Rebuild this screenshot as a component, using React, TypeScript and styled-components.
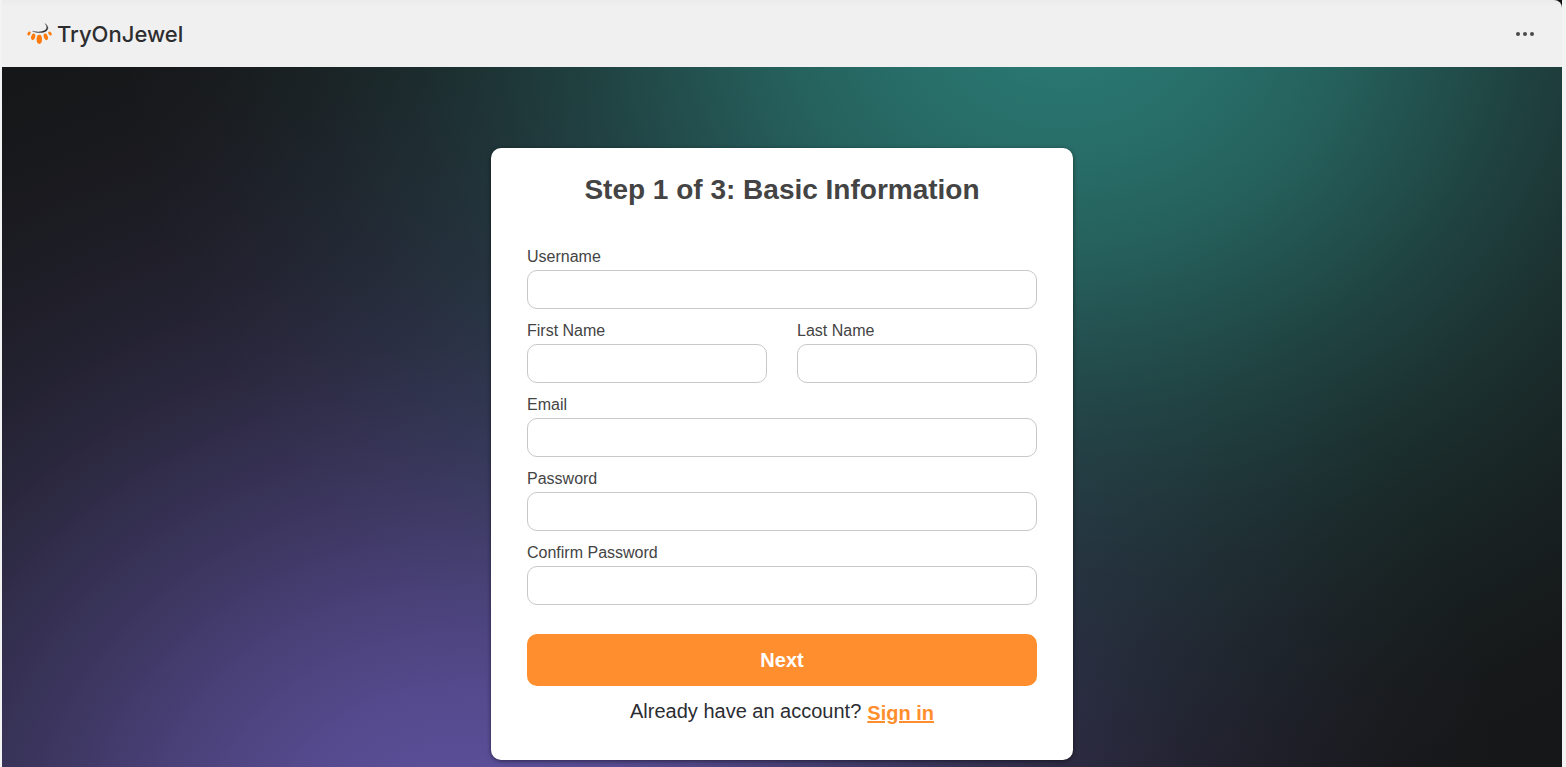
import React from "react";
import styled, { createGlobalStyle } from "styled-components";

const GlobalStyle = createGlobalStyle`
  *, *::before, *::after { box-sizing: border-box; }
  body {
    margin: 0;
    background: #f3f3f3;
    font-family: "Liberation Sans", Arial, sans-serif;
    color: #2b2d33;
  }
`;

const Page = styled.div`
  display: flex;
  flex-direction: column;
  min-height: 100vh;
  margin: 0 4px 0 2px;
  background: #111113;
`;

const Header = styled.header`
  display: flex;
  align-items: center;
  justify-content: space-between;
  height: 67px;
  padding: 0 24px;
  background: linear-gradient(#ebebeb, #f0f0f0 6px);
  border-top-right-radius: 8px;
`;

const Brand = styled.a`
  display: flex;
  align-items: center;
  gap: 5px;
  color: #2d2d2f;
  font-family: Inter, sans-serif;
  font-size: 22px;
  font-weight: 500;
  line-height: 28px;
  text-decoration: none;
`;

const MenuButton = styled.button`
  display: flex;
  padding: 4px;
  border: 0;
  background: none;
  color: #4a4a4a;
  cursor: pointer;
`;

const Main = styled.main`
  display: flex;
  flex: 1;
  align-items: flex-start;
  justify-content: center;
  padding: 81px 16px 7px;
  background:
    radial-gradient(
      ellipse 940px 820px at 68% -67px,
      rgba(42, 120, 114, 1) 6%,
      rgba(42, 120, 114, 0.88) 20%,
      rgba(42, 120, 114, 0.76) 30%,
      rgba(42, 120, 114, 0.6) 40%,
      rgba(42, 120, 114, 0.44) 50%,
      rgba(42, 120, 114, 0.3) 60%,
      rgba(42, 120, 114, 0.19) 70%,
      rgba(42, 120, 114, 0.1) 80%,
      rgba(42, 120, 114, 0.04) 90%,
      rgba(42, 120, 114, 0) 100%
    ),
    radial-gradient(
      ellipse 1040px 860px at 30% calc(100% + 88px),
      rgba(92, 80, 155, 1) 8%,
      rgba(92, 80, 155, 0.88) 20%,
      rgba(92, 80, 155, 0.74) 30%,
      rgba(92, 80, 155, 0.58) 40%,
      rgba(92, 80, 155, 0.43) 50%,
      rgba(92, 80, 155, 0.29) 60%,
      rgba(92, 80, 155, 0.18) 70%,
      rgba(92, 80, 155, 0.1) 80%,
      rgba(92, 80, 155, 0.04) 90%,
      rgba(92, 80, 155, 0) 100%
    ),
    #161718;
`;

const Card = styled.form`
  display: flex;
  flex-direction: column;
  width: 100%;
  max-width: 582px;
  padding: 25px 36px 35px;
  border-radius: 10px;
  background: #fff;
  box-shadow: 0 1px 4px rgba(0, 0, 0, 0.5);
`;

const Title = styled.h1`
  margin: 0 0 38px;
  color: #444;
  font-size: 28px;
  font-weight: 700;
  line-height: 34px;
  text-align: center;
`;

const Fields = styled.div`
  display: grid;
  grid-template-columns: 1fr 1fr;
  gap: 10px 30px;
`;

const Field = styled.div<{ $wide?: boolean }>`
  display: flex;
  flex-direction: column;
  grid-column: ${(p) => (p.$wide ? "1 / -1" : "auto")};
`;

const Label = styled.label`
  padding: 2px 0 3px;
  color: #444;
  font-size: 16px;
  line-height: 20px;
`;

const Input = styled.input`
  width: 100%;
  height: 39px;
  padding: 0 12px;
  border: 1px solid #c8c8c8;
  border-radius: 10px;
  background: #fff;
  font: inherit;
  font-size: 16px;
`;

const NextButton = styled.button`
  height: 52px;
  margin-top: 29px;
  border: 0;
  border-radius: 10px;
  background: #ff8f2e;
  color: #fff;
  font-family: inherit;
  font-size: 20px;
  font-weight: 700;
  cursor: pointer;
`;

const SignInRow = styled.p`
  display: flex;
  justify-content: center;
  gap: 6px;
  margin: 13px 0 0;
  font-size: 20px;
  line-height: 24px;
`;

const SignInLink = styled.a`
  padding-top: 2px;
  color: #ff8f2e;
  font-weight: 700;
`;

const fields = [
  { id: "username", label: "Username", type: "text", wide: true },
  { id: "firstName", label: "First Name", type: "text", wide: false },
  { id: "lastName", label: "Last Name", type: "text", wide: false },
  { id: "email", label: "Email", type: "email", wide: true },
  { id: "password", label: "Password", type: "password", wide: true },
  { id: "confirmPassword", label: "Confirm Password", type: "password", wide: true },
];

const Logo = () => (
  <svg width="26" height="24" viewBox="0 0 26 24" aria-hidden="true">
    <path
      d="M19 1.5C22.8 4.3 22.8 7.6 19.6 9.4C16.2 11.2 10.5 10.8 6.5 9.3C11 10.2 15.6 10.2 18.5 8.6C21.3 7 21.5 4.4 19 1.5Z"
      fill="#2d2d2f"
      stroke="#2d2d2f"
      strokeWidth="0.3"
    />
    <g fill="#ff7a0a">
      <ellipse cx="3" cy="11.5" rx="1.4" ry="2.2" transform="rotate(28 3 11.5)" />
      <ellipse cx="7.2" cy="14.8" rx="2" ry="3.4" transform="rotate(14 7.2 14.8)" />
      <ellipse cx="13.3" cy="17.3" rx="2.7" ry="4.6" />
      <ellipse cx="19.8" cy="14.8" rx="2" ry="3.4" transform="rotate(-16 19.8 14.8)" />
      <ellipse cx="24" cy="11.5" rx="1.4" ry="2.2" transform="rotate(-34 24 11.5)" />
    </g>
  </svg>
);

export default function App() {
  return (
    <>
      <GlobalStyle />
      <Page>
        <Header>
          <Brand href="#">
            <Logo />
            TryOnJewel
          </Brand>
          <MenuButton type="button" aria-label="Menu">
            <svg width="18" height="6" viewBox="0 0 18 6" fill="currentColor" aria-hidden="true">
              <circle cx="2" cy="3" r="2" />
              <circle cx="9" cy="3" r="2" />
              <circle cx="16" cy="3" r="2" />
            </svg>
          </MenuButton>
        </Header>
        <Main>
          <Card onSubmit={(e) => e.preventDefault()}>
            <Title>Step 1 of 3: Basic Information</Title>
            <Fields>
              {fields.map((f) => (
                <Field key={f.id} $wide={f.wide}>
                  <Label htmlFor={f.id}>{f.label}</Label>
                  <Input id={f.id} name={f.id} type={f.type} />
                </Field>
              ))}
            </Fields>
            <NextButton type="submit">Next</NextButton>
            <SignInRow>
              <span>Already have an account?</span>
              <SignInLink href="#">Sign in</SignInLink>
            </SignInRow>
          </Card>
        </Main>
      </Page>
    </>
  );
}
